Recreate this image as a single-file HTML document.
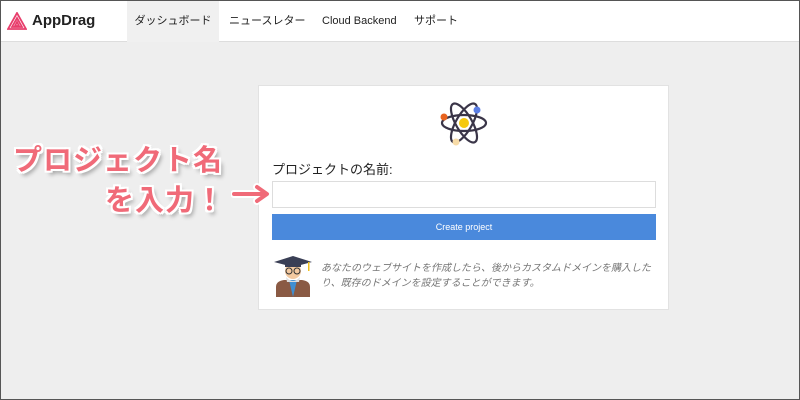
<!DOCTYPE html>
<html><head><meta charset="utf-8"><style>
*{margin:0;padding:0;box-sizing:border-box}
body{width:800px;height:400px;overflow:hidden;background:#eeeeee;font-family:"Liberation Sans","Noto Sans CJK JP",sans-serif;position:relative;border:1px solid #555}
.hdr{position:absolute;left:0;top:0;width:798px;height:41px;background:#fff;border-bottom:1px solid #ddd}
.logo{position:absolute;left:8px;top:11px;font-weight:bold;font-size:15px;color:#222}
.logo span{position:absolute;left:23px;top:0;white-space:nowrap}
.nav{position:absolute;top:0;height:41px;line-height:41px;font-size:11px;color:#222;white-space:nowrap}
.card{position:absolute;left:257px;top:84px;width:411px;height:225px;background:#fff;border:1px solid #e2e2e2}
.lbl{position:absolute;left:13px;top:73px;font-size:13px;color:#222}
.inp{position:absolute;left:13px;top:95px;width:384px;height:27px;border:1px solid #ddd}
.btn{position:absolute;left:13px;top:128px;width:384px;height:26px;background:#4a89dc;color:#fff;font-size:9px;text-align:center;line-height:26px}
.tip{position:absolute;left:62px;top:175px;width:345px;font-size:10px;line-height:15px;color:#777;font-style:italic;letter-spacing:0}
.big{position:absolute;font-weight:bold;font-size:29px;color:#f06a78;letter-spacing:1px;white-space:nowrap;text-shadow:-2px -2px 0 #fff,2px -2px 0 #fff,-2px 2px 0 #fff,2px 2px 0 #fff,0 2px 0 #fff,0 -2px 0 #fff,2px 0 0 #fff,-2px 0 0 #fff,3px 4px 4px rgba(0,0,0,.35)}
</style></head><body>
<div class="hdr">
<div class="logo"><svg width="20" height="18" viewBox="0 0 20 18" style="position:absolute;left:-2px;top:0"><path d="M10 1L1 17H19Z M10 6L5 15H15Z M10 10L8 14H12Z" fill="none" stroke="#e83e6c" stroke-width="1.8"/></svg><span>AppDrag</span></div>
<div class="nav" style="left:126px;width:92px;background:#f0f0f0;text-align:center">ダッシュボード</div>
<div class="nav" style="left:228px">ニュースレター</div>
<div class="nav" style="left:321px">Cloud Backend</div>
<div class="nav" style="left:413px">サポート</div>
</div>
<div class="card">
<svg width="50" height="52" viewBox="0 0 50 52" style="position:absolute;left:180px;top:11px">
<g fill="none" stroke="#3a3548" stroke-width="2.2">
<ellipse cx="25" cy="26" rx="22" ry="8" transform="rotate(60 25 26)"/>
<ellipse cx="25" cy="26" rx="22" ry="8" transform="rotate(-60 25 26)"/>
<ellipse cx="25" cy="26" rx="22" ry="8"/>
</g>
<circle cx="25" cy="26" r="5" fill="#f6c90e"/>
<circle cx="38" cy="13" r="3.5" fill="#5b7ee5"/>
<circle cx="5" cy="20" r="3.5" fill="#e8631f"/>
<circle cx="17" cy="45" r="3.5" fill="#f7dba7"/>
</svg>
<div class="lbl">プロジェクトの名前:</div>
<div class="inp"></div>
<div class="btn">Create project</div>
<svg width="42" height="44" viewBox="0 0 42 44" style="position:absolute;left:13px;top:167px">
<path d="M4 44V34Q4 28 12 27H30Q38 28 38 34V44Z" fill="#8a5a44"/>
<path d="M17 27L21 44L25 27Z" fill="#3f8fd2"/>
<circle cx="21" cy="18" r="8" fill="#f3c9a0"/>
<path d="M14 24Q21 32 28 24L27 29H15Z" fill="#ddd"/>
<path d="M2 9L21 3L40 9L21 14Z" fill="#3a3f55"/>
<rect x="13" y="10" width="16" height="4" fill="#3a3f55"/>
<circle cx="17" cy="18" r="3" fill="none" stroke="#333"/><circle cx="25" cy="18" r="3" fill="none" stroke="#333"/>
<rect x="36" y="9" width="1.5" height="9" fill="#f0c020"/>
</svg>
<div class="tip">あなたのウェブサイトを作成したら、後からカスタムドメインを購入した<br>り、既存のドメインを設定することができます。</div>
</div>
<div class="big" style="left:12px;top:136px">プロジェクト名</div>
<div class="big" style="left:104px;top:176px">を入力！</div>
<svg width="42" height="22" viewBox="0 0 42 22" style="position:absolute;left:230px;top:182px"><path d="M3 11H34M26 4L36 11L26 18" fill="none" stroke="#fff" stroke-width="8" stroke-linecap="round" stroke-linejoin="round"/><path d="M3 11H34M26 4L36 11L26 18" fill="none" stroke="#f06a78" stroke-width="4" stroke-linecap="round" stroke-linejoin="round"/></svg>
</body></html>
